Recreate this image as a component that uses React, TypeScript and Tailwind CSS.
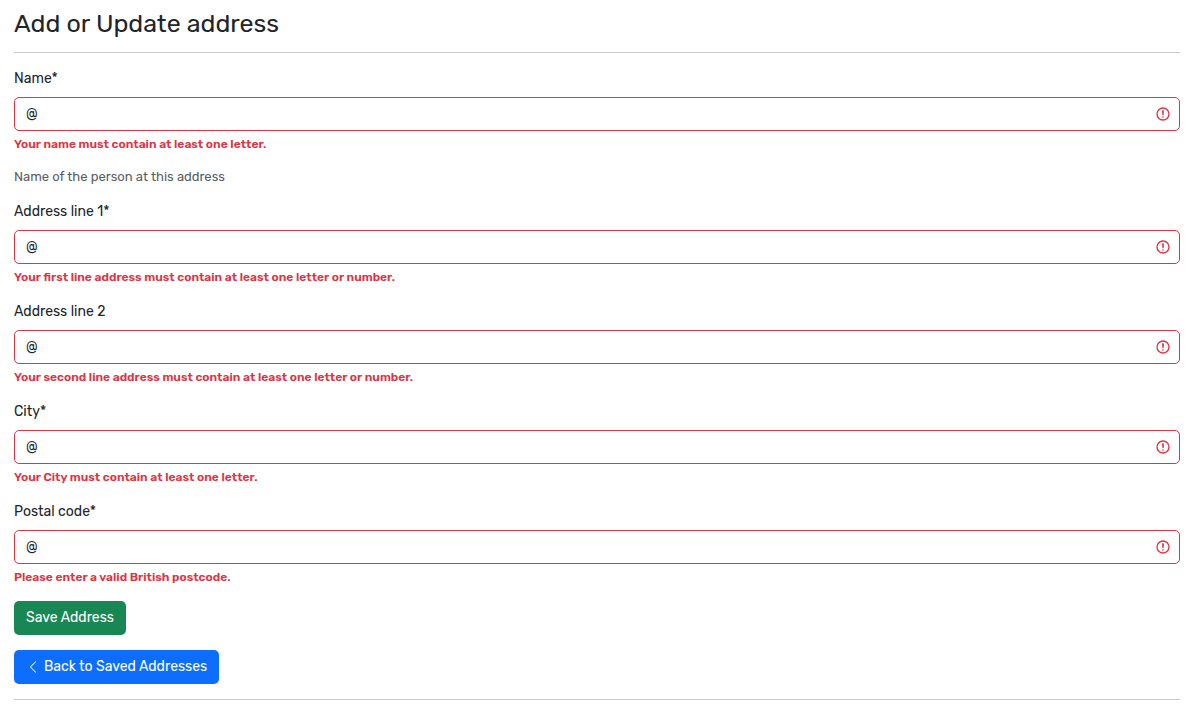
import { useState } from "react";

type Field = { id: string; label: string; error: string; help?: string };

const fields: Field[] = [
  { id: "name", label: "Name*", error: "Your name must contain at least one letter.", help: "Name of the person at this address" },
  { id: "address1", label: "Address line 1*", error: "Your first line address must contain at least one letter or number." },
  { id: "address2", label: "Address line 2", error: "Your second line address must contain at least one letter or number." },
  { id: "city", label: "City*", error: "Your City must contain at least one letter." },
  { id: "postcode", label: "Postal code*", error: "Please enter a valid British postcode." },
];

function ErrorIcon() {
  return (
    <svg className="pointer-events-none absolute top-1/2 right-[9px] size-4 -translate-y-1/2" viewBox="0 0 12 12" fill="none" stroke="#dc3545" aria-hidden="true">
      <circle cx="6" cy="6" r="4.5" />
      <path strokeLinejoin="round" d="M5.8 3.6h.4L6 6.5z" />
      <circle cx="6" cy="8.2" r=".6" fill="#dc3545" stroke="none" />
    </svg>
  );
}

function AddressField({ field }: { field: Field }) {
  const [value, setValue] = useState("@");
  return (
    <div className="mb-3.5">
      <label htmlFor={field.id} className="mb-1.5 block w-fit text-sm leading-6">
        {field.label}
      </label>
      <div className="relative">
        <input
          id={field.id}
          type="text"
          value={value}
          onChange={(e) => setValue(e.target.value)}
          aria-invalid="true"
          aria-describedby={`${field.id}-error`}
          className="block h-[34px] w-full rounded-[5px] border border-[#dc3545] bg-white pr-9 pb-px pl-[11px] text-sm"
        />
        <ErrorIcon />
      </div>
      <p id={`${field.id}-error`} className="mt-1 text-xs leading-[18px] font-semibold text-[#dc3545]">
        {field.error}
      </p>
      {field.help && <p className="mt-[15px] text-[13px] leading-[18px] text-[#595c5f]">{field.help}</p>}
    </div>
  );
}

export default function App() {
  return (
    <main className="pr-[17px] pl-3.5 font-[Rubik,Roboto,sans-serif] text-[#212529]">
      <h1 className="pt-[9px] text-[25px] leading-[30px]">Add or Update address</h1>
      <hr className="mt-[13px] mb-[14px] border-[#c8c9ca]" />
      <form onSubmit={(e) => e.preventDefault()}>
        {fields.map((field) => (
          <AddressField key={field.id} field={field} />
        ))}
        <button type="submit" className="mt-[15px] block h-[34px] rounded-[5px] bg-[#198754] px-3 pb-px text-sm leading-[22px] text-white">
          Save Address
        </button>
      </form>
      <a href="#addresses" className="mt-[15px] flex h-[34px] w-fit items-center gap-1 rounded-[5px] bg-[#0d6efd] px-3 pb-px text-sm leading-[22px] text-white">
        <svg className="size-3.5" viewBox="0 0 16 16" fill="currentColor" aria-hidden="true">
          <path fillRule="evenodd" d="M11.354 1.646a.5.5 0 0 1 0 .708L5.707 8l5.647 5.646a.5.5 0 0 1-.708.708l-6-6a.5.5 0 0 1 0-.708l6-6a.5.5 0 0 1 .708 0" />
        </svg>
        Back to Saved Addresses
      </a>
      <hr className="mt-[15px] border-[#c8c9ca]" />
    </main>
  );
}
